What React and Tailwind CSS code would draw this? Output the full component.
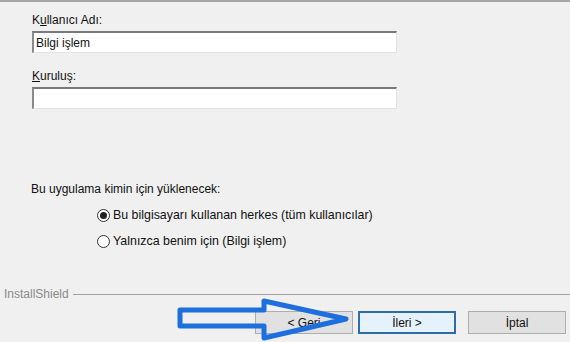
import React from 'react';

const font = { fontFamily: '"Liberation Sans", Tahoma, Arial, sans-serif' };

const Field = ({ label, ul, rest, value }) => (
  <div className="flex flex-col">
    <span className="text-[12px] leading-[15px] text-[#111]">
      {label}<span className="underline">{ul}</span>{rest}
    </span>
    <div className="mt-[3px] h-[22px] w-[365px] bg-white border-t-2 border-l-2 border-t-[#7a7a7a] border-l-[#8a8a8a] border-r border-b border-r-[#e3e3e3] border-b-[#e3e3e3] flex items-center pl-[2px] text-[12px] text-[#111]">
      {value}
    </div>
  </div>
);

const Radio = ({ checked, label }) => (
  <div className="flex items-center gap-[3px] h-[15px] text-[12.4px] text-[#111]">
    <span className="w-[13px] h-[13px] rounded-full border border-[#333] bg-white flex items-center justify-center">
      {checked && <span className="w-[7px] h-[7px] rounded-full bg-[#222]" />}
    </span>
    {label}
  </div>
);

const Btn = ({ children, primary }) => (
  <div
    className={
      'w-[98px] h-[23px] flex items-center justify-center text-[12px] text-[#111] ' +
      (primary
        ? 'bg-[#e5f1fb] border-2 border-[#2f6ea5]'
        : 'bg-[#e1e1e1] border border-[#adadad]')
    }
  >
    {children}
  </div>
);

export default function App() {
  return (
    <div style={font} className="relative w-[570px] h-[342px] bg-[#f0f0f0] border-t-2 border-[#a6a6a6] flex flex-col overflow-hidden">
      <div className="pl-[32px] pt-[11px] flex flex-col gap-[16px]">
        <Field label="K" ul="u" rest="llanıcı Adı:" value="Bilgi işlem" />
        <Field label="" ul="K" rest="uruluş:" value="" />
      </div>

      <div className="pl-[31px] mt-[73px] text-[12px] leading-[15px] text-[#111]">
        Bu uygulama kimin için yüklenecek:
      </div>
      <div className="pl-[97px] mt-[11px] flex flex-col gap-[11px]">
        <Radio checked label="Bu bilgisayarı kullanan herkes (tüm kullanıcılar)" />
        <Radio label="Yalnızca benim için (Bilgi işlem)" />
      </div>

      <div className="mt-auto pb-[8px]">
        <div className="flex items-center pl-[4px]">
          <span className="text-[12px] text-[#8a8a8a]">InstallShield</span>
          <div className="flex-1 ml-[4px] border-t border-[#a0a0a0]" />
        </div>
        <div className="flex justify-end pr-[4px] mt-[8px]">
          <Btn>&lt; Geri</Btn>
          <div className="w-[5px]" />
          <Btn primary>İleri &gt;</Btn>
          <div className="w-[12px]" />
          <Btn>İptal</Btn>
        </div>
      </div>

      <svg className="absolute left-0 top-0 pointer-events-none" width="570" height="342">
        <polygon
          points="180,308 264,308 264,299 346,317 264,336 264,324 180,324"
          fill="none"
          stroke="#1d6fdd"
          strokeWidth="5"
          strokeLinejoin="round"
        />
      </svg>
    </div>
  );
}
